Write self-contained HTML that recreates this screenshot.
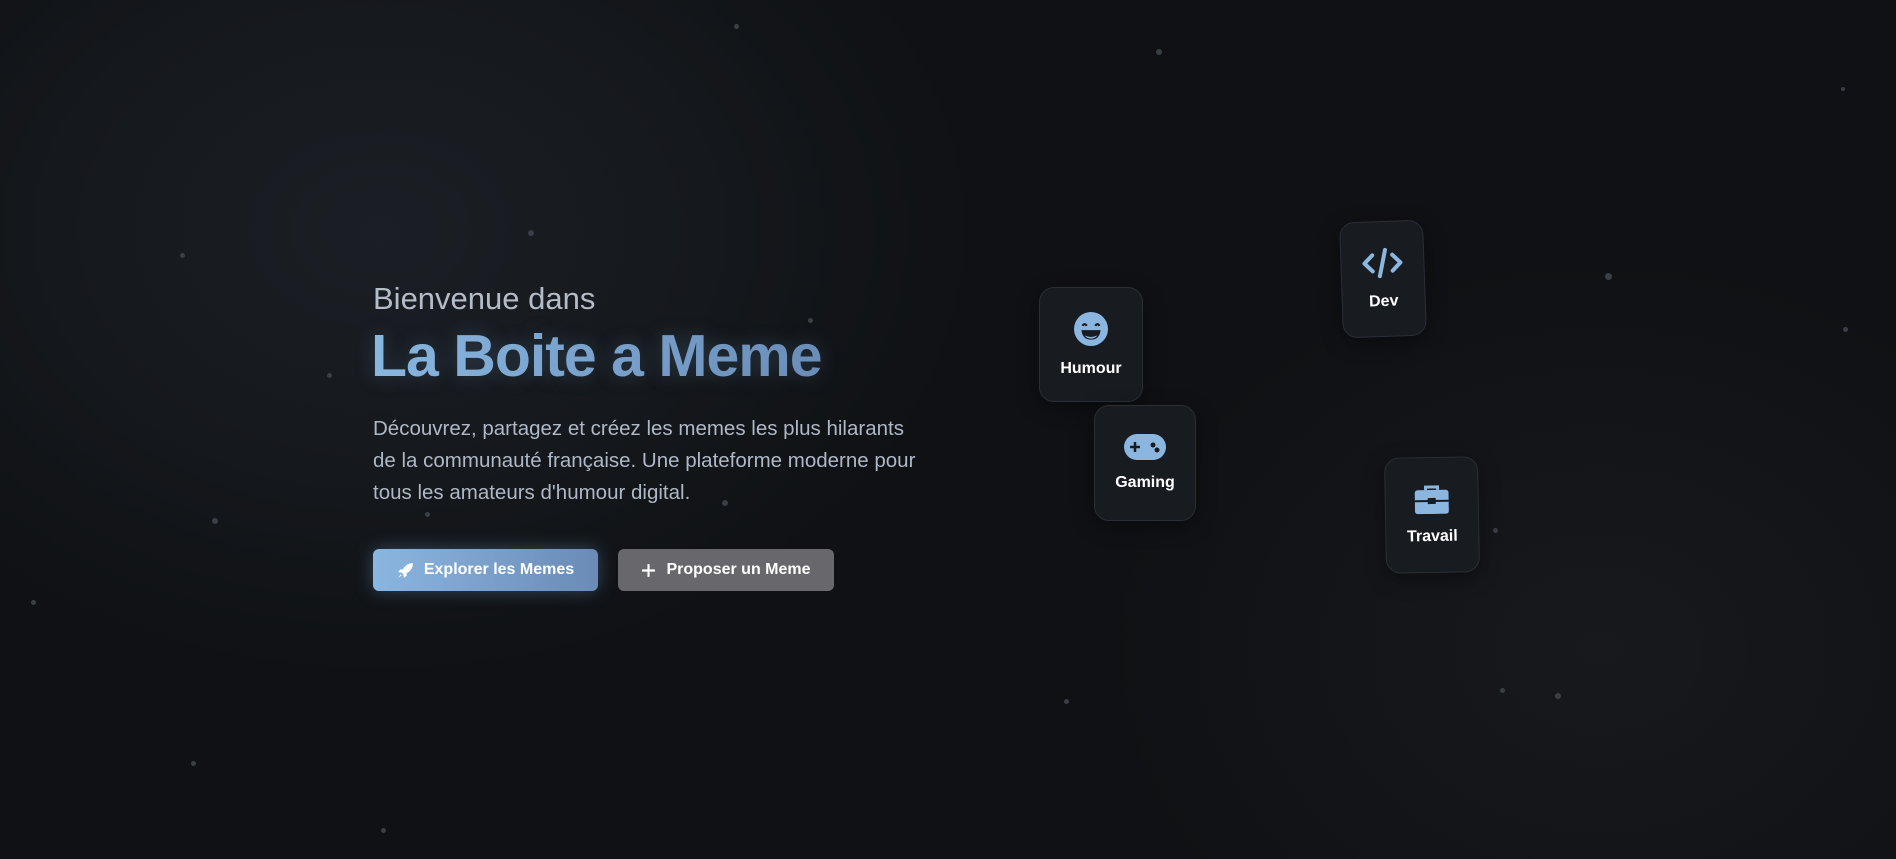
<!DOCTYPE html>
<html><head><meta charset="utf-8"><style>
*{margin:0;padding:0;box-sizing:border-box}
body{width:1896px;height:859px;overflow:hidden;font-family:"Liberation Sans",sans-serif;
background:radial-gradient(ellipse 600px 450px at 380px 230px,#1b1f25 0%,#15181c 55%,transparent 100%),radial-gradient(ellipse 500px 400px at 1600px 650px,#17191d 0%,transparent 100%),#0f1114;position:relative}
.dot{position:absolute;border-radius:50%;background:#3a3f47}
.h1{position:absolute;left:373px;top:281px;font-size:31px;color:#b4bcc8}
.h2{position:absolute;left:371px;top:322px;font-size:59px;font-weight:bold;letter-spacing:-1px;background:linear-gradient(90deg,#8bb8e0,#6a8bb5);-webkit-background-clip:text;color:transparent;text-shadow:0 0 20px rgba(120,170,220,.25)}
.p{position:absolute;left:373px;top:413px;font-size:20.5px;line-height:32px;color:#aeb8c6;width:548px}
.btn{position:absolute;top:549px;height:42px;border-radius:6px;color:#fff;font-weight:bold;font-size:16px;display:flex;align-items:center;justify-content:center;gap:10px}
.b1{left:373px;width:225px;background:linear-gradient(90deg,#8ab6e0,#6a8bb6);box-shadow:0 0 18px rgba(120,170,220,.35)}
.b2{left:618px;width:216px;background:#68686c}
.card{position:absolute;background:#181b20;border:1px solid #2a2e36;border-radius:15px;display:flex;flex-direction:column;align-items:center;justify-content:center;color:#fff;font-weight:bold;font-size:16px;gap:14px;box-shadow:0 6px 20px rgba(0,0,0,.4)}
</style></head><body>
<div class="dot" style="left:734px;top:24px;width:5px;height:5px"></div>
<div class="dot" style="left:1156px;top:49px;width:6px;height:6px"></div>
<div class="dot" style="left:528px;top:230px;width:6px;height:6px"></div>
<div class="dot" style="left:180px;top:253px;width:5px;height:5px"></div>
<div class="dot" style="left:1605px;top:273px;width:7px;height:7px"></div>
<div class="dot" style="left:808px;top:318px;width:5px;height:5px"></div>
<div class="dot" style="left:327px;top:373px;width:5px;height:5px"></div>
<div class="dot" style="left:1843px;top:327px;width:5px;height:5px"></div>
<div class="dot" style="left:212px;top:518px;width:6px;height:6px"></div>
<div class="dot" style="left:722px;top:500px;width:6px;height:6px"></div>
<div class="dot" style="left:425px;top:512px;width:5px;height:5px"></div>
<div class="dot" style="left:31px;top:600px;width:5px;height:5px"></div>
<div class="dot" style="left:1064px;top:699px;width:5px;height:5px"></div>
<div class="dot" style="left:1555px;top:693px;width:6px;height:6px"></div>
<div class="dot" style="left:1500px;top:688px;width:5px;height:5px"></div>
<div class="dot" style="left:191px;top:761px;width:5px;height:5px"></div>
<div class="dot" style="left:381px;top:828px;width:5px;height:5px"></div>
<div class="dot" style="left:1841px;top:87px;width:4px;height:4px"></div>
<div class="dot" style="left:1493px;top:528px;width:5px;height:5px"></div>

<div class="h1">Bienvenue dans</div>
<div class="h2">La Boite a Meme</div>
<div class="p">Découvrez, partagez et créez les memes les plus hilarants de la communauté française. Une plateforme moderne pour tous les amateurs d'humour digital.</div>
<div class="btn b1"><svg width="17" height="17" viewBox="0 0 16 16"><path d="M15 1C10 1 7 4 5.5 7L3 7 1 9.5 4.5 10 6 11.5 6.5 15 9 13 9 10.5C12 9 15 6 15 1Z M3.5 11.5 1 15 4.5 12.5Z" fill="#fff"/></svg>Explorer les Memes</div>
<div class="btn b2"><svg width="15" height="15" viewBox="0 0 14 14"><path d="M7 1V13M1 7H13" stroke="#fff" stroke-width="2"/></svg>Proposer un Meme</div>

<div class="card" style="left:1039px;top:287px;width:104px;height:115px"><svg width="34" height="34" viewBox="0 0 32 32"><circle cx="16" cy="16" r="16" fill="#8ab6e0"/><path d="M8 13q2-3 4 0M20 13q2-3 4 0" stroke="#181b20" stroke-width="2" fill="none"/><path d="M7 17h18q-1 9-9 9t-9-9z" fill="#181b20"/><path d="M10 22q6 3 12 0q-2 3-6 3t-6-3z" fill="#8ab6e0"/></svg>Humour</div>
<div class="card" style="left:1094px;top:405px;width:102px;height:116px"><svg width="42" height="26" viewBox="0 0 42 26"><rect x="0" y="0" width="42" height="26" rx="13" fill="#8ab6e0"/><path d="M11 8v10M6 13h10" stroke="#181b20" stroke-width="2.5"/><circle cx="29" cy="11" r="2.5" fill="#181b20"/><circle cx="33" cy="16" r="2.5" fill="#181b20"/></svg>Gaming</div>
<div class="card" style="left:1341px;top:221px;width:84px;height:116px;transform:rotate(-2deg)"><svg width="42" height="32" viewBox="0 0 42 32"><path d="M11 8 3 16l8 8M31 8l8 8-8 8M24 3 18 29" stroke="#8ab6e0" stroke-width="4" stroke-linecap="round" stroke-linejoin="round" fill="none"/></svg>Dev</div>
<div class="card" style="left:1385px;top:457px;width:94px;height:116px;transform:rotate(-1deg)"><svg width="34" height="30" viewBox="0 0 34 30"><path d="M11 6V3h12v3" stroke="#8ab6e0" stroke-width="3" fill="none"/><rect x="0" y="6" width="34" height="24" rx="3" fill="#8ab6e0"/><path d="M0 17h34" stroke="#181b20" stroke-width="2"/><rect x="13" y="14" width="8" height="6" fill="#181b20"/></svg>Travail</div>
</body></html>
